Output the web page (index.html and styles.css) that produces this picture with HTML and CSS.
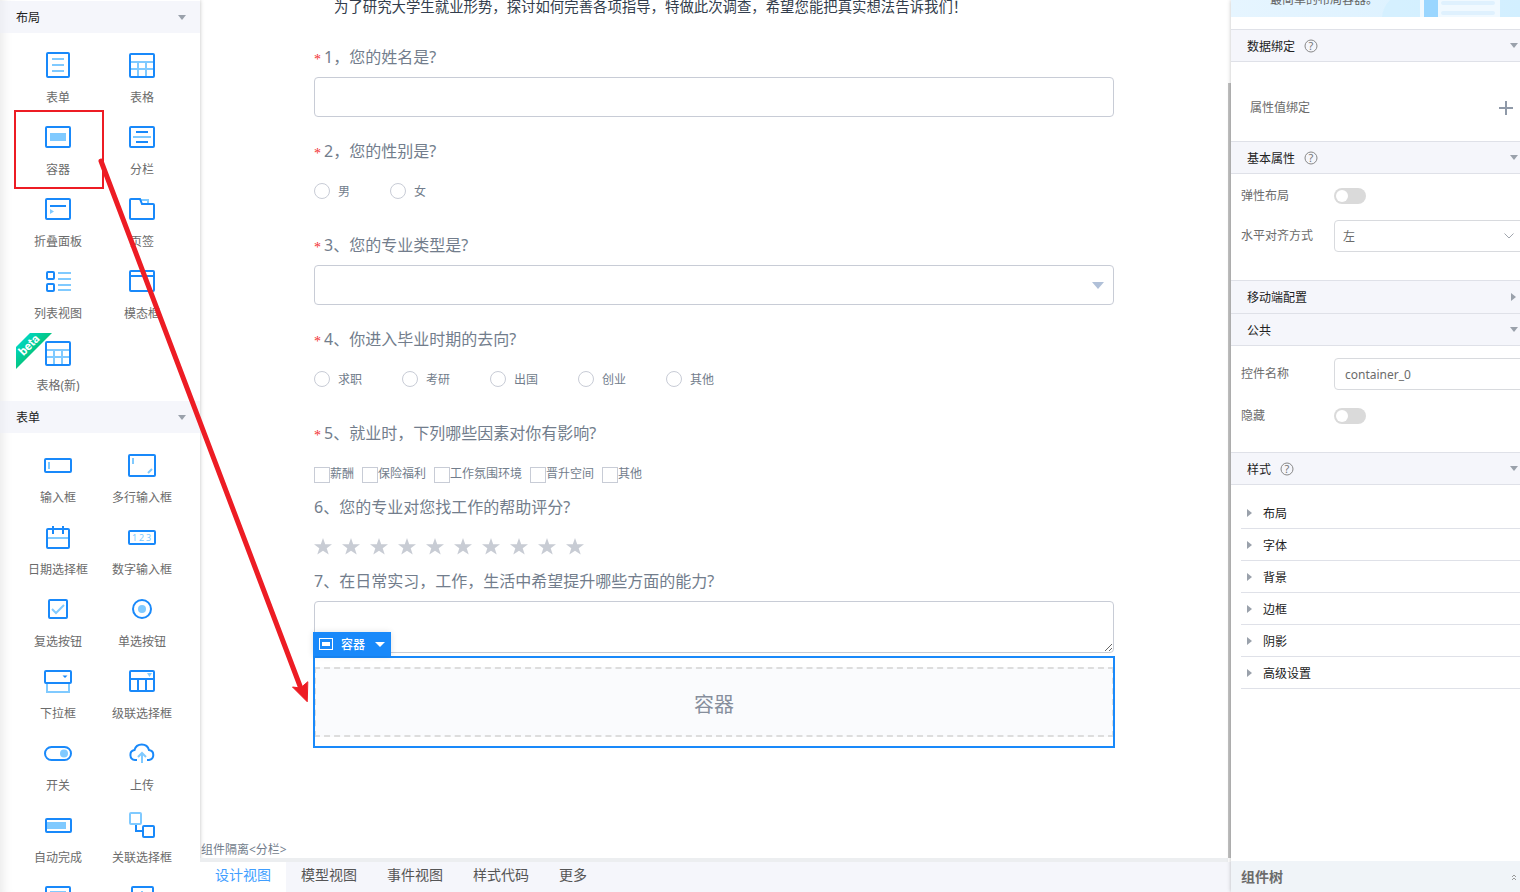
FILE: index.html
```html
<!DOCTYPE html>
<html lang="zh-CN">
<head>
<meta charset="utf-8">
<title>表单设计器</title>
<link rel="stylesheet" href="styles.css">
</head>
<body>
<div class="app">
  <aside class="palette">
    <button class="group-head" type="button"><span>布局</span><i class="caret"></i></button>
    <div class="group">
      <div class="tool"><svg class="icon" viewBox="0 0 28 28"><rect x="3" y="2" width="22" height="24" rx="1"/><path class="lt" d="M8 8h12M8 14h12M8 20h12"/></svg><span>表单</span></div>
      <div class="tool"><svg class="icon" viewBox="0 0 28 28"><path class="lt" d="M2 11h24M2 18h24M10 11v15M18 11v15"/><rect x="2" y="3" width="24" height="23" rx="1"/></svg><span>表格</span></div>
      <div class="tool"><svg class="icon" viewBox="0 0 28 28"><rect x="2" y="4" width="24" height="20" rx="1"/><path class="lf" d="M6 10h16v8H6z"/></svg><span>容器</span></div>
      <div class="tool"><svg class="icon" viewBox="0 0 28 28"><rect x="2" y="4" width="24" height="20" rx="1"/><path d="M8 9h12M8 19h12"/><path class="lt" d="M5 14h18"/></svg><span>分栏</span></div>
      <div class="tool"><svg class="icon" viewBox="0 0 28 28"><rect x="2" y="4" width="24" height="20" rx="1"/><path d="M6 11h16"/><path class="lf" d="M6 14l4 2.500L6 19z"/></svg><span>折叠面板</span></div>
      <div class="tool"><svg class="icon" viewBox="0 0 28 28"><path class="lt" d="M13 5h7v4"/><path d="M3 4h9l2 5h11a1 1 0 0 1 1 1v13a1 1 0 0 1-1 1H3a1 1 0 0 1-1-1V5a1 1 0 0 1 1-1z"/></svg><span>页签</span></div>
      <div class="tool"><svg class="icon" viewBox="0 0 28 28"><rect x="3" y="5" width="7" height="7" rx="1"/><rect x="3" y="17" width="7" height="7" rx="1"/><path class="lt" d="M14 6h13M14 12h13M14 18h13M14 23h13"/></svg><span>列表视图</span></div>
      <div class="tool"><svg class="icon" viewBox="0 0 28 28"><rect x="2" y="4" width="24" height="20" rx="1"/><path d="M2 9h24"/></svg><span>模态框</span></div>
      <div class="tool">
        <svg class="ribbon" viewBox="0 0 36 36"><defs><linearGradient id="rg" x1="0" y1="0" x2="1" y2="1"><stop offset="0" stop-color="#00dfe0"/><stop offset=".6" stop-color="#04c172"/></linearGradient></defs><path d="M0 14L14 0h22L0 36z" fill="url(#rg)"/><text x="13" y="16" transform="rotate(-45 13 12)">beta</text></svg>
        <svg class="icon" viewBox="0 0 28 28"><path class="lt" d="M2 11h24M2 18h24M10 11v15M18 11v15"/><rect x="2" y="3" width="24" height="23" rx="1"/></svg><span>表格(新)</span></div>
    </div>
    <button class="group-head" type="button"><span>表单</span><i class="caret"></i></button>
    <div class="group">
      <div class="tool"><svg class="icon" viewBox="0 0 28 28"><rect x="1" y="8" width="26" height="13" rx="1"/><path class="lt" d="M5 11v7"/></svg><span>输入框</span></div>
      <div class="tool"><svg class="icon" viewBox="0 0 28 28"><rect x="1" y="4" width="26" height="21" rx="1"/><path class="lt" d="M5 7v6M20 22l4-4"/></svg><span>多行输入框</span></div>
      <div class="tool"><svg class="icon" viewBox="0 0 28 28"><path class="lt" d="M3 15h22"/><rect x="3" y="6" width="22" height="19" rx="1"/><path d="M9 3v8M19 3v8"/></svg><span>日期选择框</span></div>
      <div class="tool"><svg class="icon" viewBox="0 0 28 28"><rect x="1" y="8" width="26" height="13" rx="1"/><text class="digits" x="4 11 18" y="18">123</text></svg><span>数字输入框</span></div>
      <div class="tool"><svg class="icon" viewBox="0 0 28 28"><rect x="5" y="5" width="18" height="18" rx="1"/><path class="lt" d="M8 14l4 4 8-8"/></svg><span>复选按钮</span></div>
      <div class="tool"><svg class="icon" viewBox="0 0 28 28"><circle cx="14" cy="14" r="9"/><circle class="lf" cx="14" cy="14" r="4"/></svg><span>单选按钮</span></div>
      <div class="tool"><svg class="icon" viewBox="0 0 28 28"><path class="lt" d="M3 16v9h22v-9"/><rect x="1" y="4" width="26" height="12" rx="1"/><path class="df" d="M18.500 8.500h5L21 11z"/></svg><span>下拉框</span></div>
      <div class="tool"><svg class="icon" viewBox="0 0 28 28"><rect x="2" y="4" width="24" height="20" rx="1"/><path d="M2 12h24M10 12v12M18 12v12"/><path class="lf" d="M19 6h5l-2.500 4z"/></svg><span>级联选择框</span></div>
      <div class="tool"><svg class="icon" viewBox="0 0 28 28"><rect x="1" y="8" width="26" height="13" rx="6.500"/><circle class="lf" cx="20" cy="14.500" r="4"/></svg><span>开关</span></div>
      <div class="tool"><svg class="icon" viewBox="0 0 28 28"><path d="M9 21H7a5 5 0 0 1-.5-9.900 7.500 7.500 0 0 1 14.500 0A5 5 0 0 1 21 21h-2"/><path class="lt" d="M14 24v-9M10 18l4-4 4 4"/></svg><span>上传</span></div>
      <div class="tool"><svg class="icon" viewBox="0 0 28 28"><rect x="2" y="8" width="25" height="13" rx="1"/><path class="lf" d="M3 11h19v7H3z"/></svg><span>自动完成</span></div>
      <div class="tool"><svg class="icon" viewBox="0 0 28 28"><rect class="lt" x="2" y="2" width="11" height="11" rx="1"/><rect x="15" y="15" width="11" height="11" rx="1"/><path d="M8 14v6h7"/></svg><span>关联选择框</span></div>
      <div class="tool"><svg class="icon" viewBox="0 0 28 28"><rect x="2" y="4" width="24" height="20" rx="1"/><path class="lt" d="M7 9h14v10H7z"/></svg></div>
      <div class="tool"><svg class="icon" viewBox="0 0 28 28"><rect x="4" y="4" width="21" height="20" rx="1"/><path class="lt" d="M14 8v10"/></svg></div>
    </div>
  </aside>

  <main class="stage">
    <div class="canvas">
      <form class="survey">
        <p class="intro">为了研究大学生就业形势，探讨如何完善各项指导，特做此次调查，希望您能把真实想法告诉我们！</p>
        <div class="field"><label class="question" for="q1"><b class="req">*</b>1，您的姓名是?</label><input class="box" id="q1" type="text"></div>
        <div class="field"><div class="question"><b class="req">*</b>2，您的性别是?</div>
          <div class="radios"><label><input type="radio" name="q2">男</label><label><input type="radio" name="q2">女</label></div></div>
        <div class="field"><label class="question" for="q3"><b class="req">*</b>3、您的专业类型是?</label><select class="box picker" id="q3"></select></div>
        <div class="field"><div class="question"><b class="req">*</b>4、你进入毕业时期的去向?</div>
          <div class="radios"><label><input type="radio" name="q4">求职</label><label><input type="radio" name="q4">考研</label><label><input type="radio" name="q4">出国</label><label><input type="radio" name="q4">创业</label><label><input type="radio" name="q4">其他</label></div></div>
        <div class="field tight"><div class="question"><b class="req">*</b>5、就业时，下列哪些因素对你有影响?</div>
          <div class="checks"><label><input type="checkbox">薪酬</label><label><input type="checkbox">保险福利</label><label><input type="checkbox">工作氛围环境</label><label><input type="checkbox">晋升空间</label><label><input type="checkbox">其他</label></div></div>
        <div class="field tight"><div class="question">6、您的专业对您找工作的帮助评分?</div>
          <div class="stars">
            <svg width="0" height="0"><defs><path id="star" d="M9 0l2.200 6.200H18l-5.300 4 2 6.300L9 12.700l-5.700 3.800 2-6.300L0 6.200h6.800z"/></defs></svg>
            <button type="button" aria-label="1"><svg viewBox="0 0 18 17"><use href="#star"/></svg></button><button type="button" aria-label="2"><svg viewBox="0 0 18 17"><use href="#star"/></svg></button><button type="button" aria-label="3"><svg viewBox="0 0 18 17"><use href="#star"/></svg></button><button type="button" aria-label="4"><svg viewBox="0 0 18 17"><use href="#star"/></svg></button><button type="button" aria-label="5"><svg viewBox="0 0 18 17"><use href="#star"/></svg></button><button type="button" aria-label="6"><svg viewBox="0 0 18 17"><use href="#star"/></svg></button><button type="button" aria-label="7"><svg viewBox="0 0 18 17"><use href="#star"/></svg></button><button type="button" aria-label="8"><svg viewBox="0 0 18 17"><use href="#star"/></svg></button><button type="button" aria-label="9"><svg viewBox="0 0 18 17"><use href="#star"/></svg></button><button type="button" aria-label="10"><svg viewBox="0 0 18 17"><use href="#star"/></svg></button>
          </div></div>
        <div class="field tight"><label class="question" for="q7">7、在日常实习，工作，生活中希望提升哪些方面的能力?</label><textarea class="box area" id="q7"></textarea></div>
        <div class="selected">
          <button class="tag" type="button"><svg viewBox="0 0 14 12"><rect x=".5" y=".5" width="13" height="11" fill="none" stroke="#fff"/><path fill="#fff" d="M3 4h8v4H3z"/></svg><span>容器</span><i class="caret white"></i></button>
          <div class="drop">容器</div>
        </div>
      </form>
      <div class="isolate">组件隔离&lt;分栏&gt;</div>
      <div class="thumb"></div>
    </div>
    <nav class="tabs">
      <button class="tab active" type="button">设计视图</button><button class="tab" type="button">模型视图</button><button class="tab" type="button">事件视图</button><button class="tab" type="button">样式代码</button><button class="tab" type="button">更多</button>
    </nav>
  </main>

  <aside class="props">
    <div class="banner"><svg class="banner-art" viewBox="0 0 140 17"><path fill="#cfeeff" d="M2 17Q3 7 10 0h130v17z" opacity=".6"/><path fill="#f0f9ff" d="M40 0h80v17H40z"/><path fill="#9ad6ff" d="M44 0h14v17H44z"/><path stroke="#dff1fe" stroke-width="4" stroke-linecap="round" d="M63 3h50M63 13h50"/></svg><span>最简单的布局容器。</span></div>
    <button class="section-head" type="button"><span>数据绑定</span><svg class="help" viewBox="0 0 14 14"><circle cx="7" cy="7" r="6"/><text x="7" y="11">?</text></svg><i class="caret"></i></button>
    <div class="binding"><span>属性值绑定</span><button class="plus" type="button" aria-label="添加"><svg viewBox="0 0 14 14"><path d="M7 0v14M0 7h14"/></svg></button></div>
    <button class="section-head" type="button"><span>基本属性</span><svg class="help" viewBox="0 0 14 14"><circle cx="7" cy="7" r="6"/><text x="7" y="11">?</text></svg><i class="caret"></i></button>
    <div class="rows basic">
      <div class="row"><label for="flex">弹性布局</label><input class="switch" id="flex" type="checkbox"></div>
      <div class="row"><label for="align">水平对齐方式</label><select class="control choice" id="align"><option>左</option></select></div>
    </div>
    <button class="section-head joined" type="button"><span>移动端配置</span><i class="caret side"></i></button>
    <button class="section-head" type="button"><span>公共</span><i class="caret"></i></button>
    <div class="rows common">
      <div class="row"><label for="name">控件名称</label><input class="control" id="name" type="text" value="container_0"></div>
      <div class="row"><label for="hide">隐藏</label><input class="switch" id="hide" type="checkbox"></div>
    </div>
    <button class="section-head" type="button"><span>样式</span><svg class="help" viewBox="0 0 14 14"><circle cx="7" cy="7" r="6"/><text x="7" y="11">?</text></svg><i class="caret"></i></button>
    <div class="styles">
      <button type="button"><i class="caret side"></i><span>布局</span></button>
      <button type="button"><i class="caret side"></i><span>字体</span></button>
      <button type="button"><i class="caret side"></i><span>背景</span></button>
      <button type="button"><i class="caret side"></i><span>边框</span></button>
      <button type="button"><i class="caret side"></i><span>阴影</span></button>
      <button type="button"><i class="caret side"></i><span>高级设置</span></button>
    </div>
    <button class="tree" type="button"><span>组件树</span><svg viewBox="0 0 6 6"><path d="M1 3l2-2 2 2M1 6l2-2 2 2"/></svg></button>
  </aside>

  <svg class="notes" width="320" height="720" viewBox="0 0 320 720"><rect x="15" y="111" width="88" height="77"/><path d="M101 161L300 686"/><path class="head" d="M307 701.500L292.500 687l8 1 7-6z"/></svg>
</div>
</body>
</html>
```

FILE: styles.css
```css
* { box-sizing: border-box; }
body { margin: 0; font: 12px/20px "Noto Sans", "Noto Sans CJK SC", sans-serif; color: #6b6b6b; background: #fff; }
button, input, select, textarea { font: inherit; color: inherit; margin: 0; }
button { border: 0; padding: 0; background: none; text-align: left; }
.app { position: relative; display: flex; height: 100vh; overflow: hidden; }

.caret { flex: none; width: 0; height: 0; border: 4px solid transparent; border-top: 5px solid #9aa1ab; border-bottom: 0; }
.caret.side { border: 4px solid transparent; border-left: 5px solid #9aa1ab; border-right: 0; }
.caret.white { border-width: 5px 5px 0; border-top-color: #fff; }

.palette { flex: none; width: 200px; padding-top: 1px; overflow: hidden; box-shadow: 0 0 4px rgba(0, 0, 0, .25), inset 12px 0 12px -10px rgba(0, 0, 0, .1); }
.group-head { display: flex; align-items: center; justify-content: space-between; width: 100%; height: 32px; padding: 0 14px 0 16px; background: rgba(235, 238, 247, .5); color: #222; }
.group-head span, .section-head span, .styles span, .radios label { padding-top: 2px; }
.group { display: grid; grid-template-columns: 1fr 1fr; grid-auto-rows: 72px; padding: 8px 16px 0; }
.tool { position: relative; display: flex; flex-direction: column; align-items: center; gap: 9px; padding-top: 10px; white-space: nowrap; }
.icon { flex: none; width: 28px; height: 28px; fill: none; stroke: #1989fa; stroke-width: 2; }
.icon .lt { stroke: #80caff; }
.icon .lf { fill: #80caff; stroke: none; }
.icon .df { fill: #1989fa; stroke: none; }
.digits { font: 9px "Noto Sans", sans-serif; fill: #80caff; stroke: none; }
.ribbon { position: absolute; left: 0; top: 4px; width: 36px; height: 36px; }
.ribbon text { font: bold 12px Roboto, sans-serif; fill: #fff; text-anchor: middle; }

.stage { flex: 1; min-width: 0; display: flex; flex-direction: column; }
.canvas { position: relative; flex: 1; min-height: 0; display: flex; flex-direction: column; padding-right: 3px; overflow: hidden; color: #727d8c; }
.thumb { position: absolute; right: 0; top: 83px; bottom: 4px; width: 3px; background: #c1c1c1; }
.survey { width: 100%; max-width: 800px; margin: 0 auto; }
.intro { margin: 0 0 20px; padding-left: 20px; height: 17px; line-height: 14px; font-size: 0.9rem; color: #333d4c; white-space: nowrap; }
.field { margin-bottom: 14px; }
.field.tight { margin-bottom: 0; }
.question { display: flex; height: 40px; line-height: 40px; font-size: 16px; }
.req { width: 10px; font: 14px/46px "Liberation Serif", serif; color: #f23030; }
.box { display: block; width: 100%; height: 40px; border: 1px solid #c8ccd6; border-radius: 4px; background: #fff; }
.picker { appearance: none; background: #fff url("data:image/svg+xml,%3Csvg xmlns='http://www.w3.org/2000/svg' width='12' height='7'%3E%3Cpath fill='%23b0c0d8' d='M0 0h12L6 7z'/%3E%3C/svg%3E") no-repeat right 9px center; }
.area { height: 52px; resize: vertical; }
.radios { display: flex; gap: 40px; height: 40px; padding-top: 9px; }
.radios label { display: flex; align-items: flex-start; gap: 8px; }
.radios input, .checks input { appearance: none; flex: none; width: 16px; height: 16px; border: 1px solid #c8ccd6; background: #fff; }
.radios input { margin-top: 1px; border-radius: 50%; }
.checks { display: flex; gap: 8px; height: 34px; padding-top: 11px; }
.checks label { display: flex; align-items: flex-start; height: 20px; }
.checks input { margin-top: 3px; }
.radios input { margin-top: 1px; }
.stars { display: flex; align-items: center; height: 34px; padding-top: 4px; }
.stars button { flex: none; width: 28px; height: 17px; }
.stars button svg { display: block; width: 18px; height: 17px; fill: #c8ccd4; }
.selected { position: relative; margin-top: 4px; padding: 10px 0; outline: 2px solid #1989fa; outline-offset: -1px; }
.drop { display: flex; align-items: center; justify-content: center; height: 70px; padding-top: 5px; border: 2px dashed #ddd; background: #fafbfd; font-size: 20px; color: #868e9c; }
.tag { position: absolute; left: -1px; top: -25px; display: flex; align-items: center; gap: 8px; width: 78px; height: 24px; padding: 0 6px; background: #1989fa; color: #fff; font-weight: 500; box-shadow: 0 0 6px rgba(0, 0, 0, .12); }
.tag span { padding-top: 2px; }
.tag .caret { margin-left: auto; }
.tag svg { width: 14px; height: 12px; }
.isolate { margin-top: auto; height: 22px; padding-left: 1px; line-height: 20px; border-bottom: 4px solid #eceef0; }
.tabs { display: flex; height: 30px; background: #f5f6fb; }
.tab { padding: 0 15px 4px; font-size: 14px; color: #555; }
.tab.active { background: #fff; color: #409eff; }

.props { position: relative; flex: none; display: flex; flex-direction: column; width: 289px; overflow: hidden; background: #fff; box-shadow: 0 0 4px rgba(0, 0, 0, .25); }
.banner { position: relative; flex: none; height: 17px; margin-bottom: 12px; padding-left: 39px; overflow: hidden; background: linear-gradient(90deg, #e6f5ff, #d8f0ff); }
.banner span { position: absolute; top: -10px; color: #666; }
.banner-art { position: absolute; right: 0; top: 0; width: 140px; height: 17px; }
.section-head { flex: none; display: flex; align-items: center; height: 33px; padding: 0 2px 0 16px; border: solid #dfe1e8; border-width: 1px 0; background: #f5f6fb; color: #222; }
.section-head.joined { border-bottom: 0; padding-right: 4px; }
.section-head .caret { margin-left: auto; }
.help { width: 14px; height: 14px; margin-left: 9px; fill: none; stroke: #888; overflow: visible; }
.help text { font: 11px "Noto Sans", sans-serif; fill: #777; stroke: none; text-anchor: middle; }
.binding { flex: none; display: flex; align-items: center; justify-content: space-between; height: 79px; padding: 13px 7px 0 19px; }
.plus svg { display: block; width: 14px; height: 14px; stroke: #8f99a8; stroke-width: 2; }
.rows { flex: none; display: grid; padding-left: 10px; }
.basic { gap: 8px; padding-top: 6px; padding-bottom: 28px; }
.common { gap: 10px; padding-top: 12px; padding-bottom: 20px; }
.row { display: flex; align-items: center; height: 32px; }
.row label { flex: none; width: 93px; }
.control { flex: 1; min-width: 0; height: 32px; margin-right: -4px; padding: 0 10px; border: 1px solid #d8dade; border-radius: 4px; background: #fff; }
.choice { appearance: none; padding: 2px 8px 0; background: url("data:image/svg+xml,%3Csvg xmlns='http://www.w3.org/2000/svg' width='10' height='6'%3E%3Cpath fill='none' stroke='%23a0a5ad' d='M.5.5L5 5 9.500.5'/%3E%3C/svg%3E") no-repeat right 9px center; }
.switch { appearance: none; width: 32px; height: 16px; border-radius: 8px; background: #dadada; }
.switch::before { content: ""; display: block; width: 12px; height: 12px; margin: 2px; border-radius: 50%; background: #fff; }
.styles { flex: none; display: grid; padding: 12px 0 0 10px; }
.styles button { display: flex; align-items: center; gap: 11px; height: 32px; padding-left: 6px; border-bottom: 1px solid #dfe1e8; color: #222; }
.tree { display: flex; align-items: center; justify-content: space-between; flex: none; height: 31px; margin-top: auto; padding: 0 3px 0 10px; background: #f0f4f8; font-size: 14px; font-weight: bold; }
.tree svg { width: 6px; height: 6px; fill: none; stroke: #999; }

.notes { position: absolute; left: 0; top: 0; pointer-events: none; fill: none; stroke: #ed1c24; stroke-width: 2; }
.notes path { stroke-width: 5; stroke-linecap: round; }
.notes .head { fill: #ed1c24; stroke-width: 1; }
```
